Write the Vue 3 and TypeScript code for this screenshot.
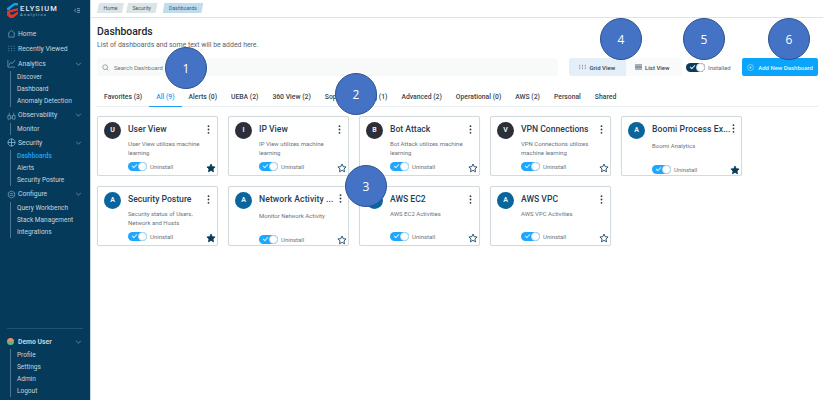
<template>
  <div class="app">
    <aside class="sidebar">
      <div class="brand">
        <svg class="logo" viewBox="0 0 12 15" width="12" height="15">
          <polygon points="0,5 7,0 11,0 11,2.500 7.500,2.500 3,6 3,7 0,7" fill="#1e9be0" />
          <polygon points="11,5 11,7.500 3,9.500 0,9.500 0,8 " fill="#e5352b" />
          <polygon points="0,9 3,9 3,11 5,12 11,8.500 11,11 6,15 3,15 0,12.500" fill="#e5352b" />
        </svg>
        <div class="brand-text">
          <div class="brand-name">ELYSIUM</div>
          <div class="brand-sub">Analytics</div>
        </div>
        <svg class="collapse" viewBox="0 0 10 8" width="6" height="5">
          <path d="M3 1 1 4l2 3M5 1h5M5 4h5M5 7h5" fill="none" stroke="#9db6c6" stroke-width="1.200" />
        </svg>
      </div>

      <nav class="nav">
        <div v-for="group in navGroups" :key="group.label" class="group">
          <div class="nav-head">
            <svg class="nav-icon" viewBox="0 0 10 10" width="9" height="9">
              <path :d="group.icon" fill="none" :stroke="group.active ? '#8fc7ea' : '#7fa3b9'" stroke-width=".8" />
            </svg>
            <span>{{ group.label }}</span>
            <svg v-if="group.items.length" class="chev" viewBox="0 0 8 5" width="7" height="4">
              <path d="M1 1l3 3 3-3" fill="none" stroke="#8fb0c4" stroke-width=".8" />
            </svg>
          </div>
          <ul v-if="group.items.length" class="sub">
            <li v-for="item in group.items" :key="item" :class="{ current: item === 'Dashboards' }">{{ item }}</li>
          </ul>
        </div>
      </nav>

      <div class="user">
        <div class="nav-head user-head">
          <span class="user-dot"></span>
          <span>Demo User</span>
          <svg class="chev" viewBox="0 0 8 5" width="7" height="4">
            <path d="M1 1l3 3 3-3" fill="none" stroke="#8fb0c4" stroke-width=".8" />
          </svg>
        </div>
        <ul class="sub">
          <li v-for="item in userItems" :key="item">{{ item }}</li>
        </ul>
      </div>
    </aside>

    <main class="main">
      <div class="crumbs">
        <span class="crumb">Home</span>
        <span class="crumb">Security</span>
        <span class="crumb on">Dashboards</span>
      </div>

      <div class="content">
        <h1>Dashboards</h1>
        <p class="lead">List of dashboards and some text will be added here.</p>

        <div class="tools">
          <div class="search">
            <svg viewBox="0 0 10 10" width="7" height="7">
              <circle cx="4.500" cy="4.500" r="3.400" fill="none" stroke="#6c7680" stroke-width=".9" />
              <path d="M7 7l2.200 2.200" stroke="#6c7680" stroke-width=".9" />
            </svg>
            <span>Search Dashboard</span>
          </div>
          <div class="views">
            <div class="view on">
              <svg viewBox="0 0 10 8" width="7" height="6">
                <path d="M1 1v1M1 3.500v1M1 6v1M5 1v1M5 3.500v1M5 6v1M9 1v1M9 3.500v1M9 6v1" stroke="#5b6670" stroke-width="1.400" />
              </svg>
              Grid View
            </div>
            <div class="view">
              <svg viewBox="0 0 10 8" width="7" height="6">
                <path d="M0 1h10M0 3h10M0 5h10M0 7h10" stroke="#3d4750" stroke-width="1" />
              </svg>
              List View
            </div>
          </div>
          <div class="installed">
            <span class="switch dark"><i></i></span>
            <span>Installed</span>
          </div>
          <button class="add">
            <svg viewBox="0 0 10 10" width="7" height="7">
              <circle cx="5" cy="5" r="4.200" fill="none" stroke="#cdeeff" stroke-width=".7" />
              <path d="M5 3v4M3 5h4" stroke="#cdeeff" stroke-width=".7" />
            </svg>
            Add New Dashboard
          </button>
        </div>

        <div class="tabs">
          <span v-for="tab in tabs" :key="tab" class="tab" :class="{ on: tab === 'All (9)' }">{{ tab }}</span>
        </div>

        <div class="cards">
          <div v-for="card in cards" :key="card.title" class="card" :class="{ long: card.long }">
            <div class="avatar" :class="{ slate: card.letter !== 'A' }">{{ card.letter }}</div>
            <div class="card-body">
              <div class="card-title">
                <span class="name">{{ card.title }}</span>
                <svg class="kebab" viewBox="0 0 3 10" width="3" height="9">
                  <circle cx="1.500" cy="1.300" r="1" fill="#2f3a44" />
                  <circle cx="1.500" cy="5" r="1" fill="#2f3a44" />
                  <circle cx="1.500" cy="8.700" r="1" fill="#2f3a44" />
                </svg>
              </div>
              <p class="desc">{{ card.desc }}</p>
              <div class="card-foot">
                <span class="switch"><i></i></span>
                <span class="uninstall">Uninstall</span>
                <svg class="star" viewBox="0 0 24 24" width="10" height="10">
                  <path
                    d="M12 2.500l2.900 6.300 6.900.8-5.100 4.700 1.400 6.800-6.100-3.400-6.100 3.400 1.400-6.800-5.100-4.700 6.900-.8z"
                    :fill="card.fav ? '#0b3a5a' : 'none'"
                    stroke="#0b3a5a"
                    stroke-width="2"
                  />
                </svg>
              </div>
            </div>
          </div>
        </div>
      </div>
    </main>

    <div v-for="mark in marks" :key="mark.n" class="mark" :style="{ left: mark.x + 'px', top: mark.y + 'px' }">
      {{ mark.n }}
    </div>
  </div>
</template>

<script setup lang="ts">
interface NavGroup {
  label: string;
  icon: string;
  items: string[];
  active?: boolean;
}

interface Card {
  letter: string;
  title: string;
  desc: string;
  fav?: boolean;
  long?: boolean;
}

const navGroups: NavGroup[] = [
  { label: "Home", icon: "M1 5l4-3.500L9 5M2 4.500V9h6V4.500", items: [] },
  { label: "Recently Viewed", icon: "M2 2v1M2 4.500v1M2 7v1M5 2v1M5 4.500v1M5 7v1M8 2v1M8 4.500v1M8 7v1", items: [] },
  {
    label: "Analytics",
    icon: "M1 1v8h8M2 7l2-3 2 1 3-4",
    items: ["Discover", "Dashboard", "Anomaly Detection"],
  },
  { label: "Observability", icon: "M1 5v4h3V5zM6 5v4h3V5zM4 7h2M2.500 5V2M7.500 5V2", items: ["Monitor"] },
  {
    label: "Security",
    icon: "M5 1a4 4 0 1 0 .01 0M1 5h8M5 1v8",
    items: ["Dashboards", "Alerts", "Security Posture"],
    active: true,
  },
  {
    label: "Configure",
    icon: "M5 1l3.500 2v4L5 9 1.500 7V3zM3 4h4M3 6h4",
    items: ["Query Workbench", "Stack Management", "Integrations"],
  },
];

const userItems = ["Profile", "Settings", "Admin", "Logout"];

const tabs = [
  "Favorites (3)",
  "All (9)",
  "Alerts (0)",
  "UEBA (2)",
  "360 View (2)",
  "Sophos Alert Log (1)",
  "Advanced (2)",
  "Operational (0)",
  "AWS (2)",
  "Personal",
  "Shared",
];

const cards: Card[] = [
  { letter: "U", title: "User View", desc: "User View utilizes machine learning", fav: true },
  { letter: "I", title: "IP View", desc: "IP View utilizes machine learning" },
  { letter: "B", title: "Bot Attack", desc: "Bot Attack utilizes machine learning" },
  { letter: "V", title: "VPN Connections", desc: "VPN Connections utilizes machine learning" },
  { letter: "A", title: "Boomi Process Ex...", desc: "Boomi Analytics", fav: true, long: true },
  { letter: "A", title: "Security Posture", desc: "Security status of Users, Network and Hosts", fav: true },
  { letter: "A", title: "Network Activity ...", desc: "Monitor Network Activity", long: true },
  { letter: "A", title: "AWS EC2", desc: "AWS EC2 Activities" },
  { letter: "A", title: "AWS VPC", desc: "AWS VPC Activities" },
];

// numbered callouts drawn over the page
const marks = [
  { n: 1, x: 165, y: 47 },
  { n: 2, x: 335, y: 73 },
  { n: 3, x: 345, y: 165 },
  { n: 4, x: 600, y: 18 },
  { n: 5, x: 683, y: 18 },
  { n: 6, x: 768, y: 18 },
];
</script>

<style>
html,
body {
  margin: 0;
  background: #fff;
}
</style>

<style scoped>
.app {
  position: relative;
  display: flex;
  width: 832px;
  height: 400px;
  overflow: hidden;
  font-family: Roboto, "Liberation Sans", sans-serif;
  color: #2c3640;
}

.sidebar {
  display: flex;
  flex-direction: column;
  flex: none;
  width: 90px;
  background: #063a5b;
  color: #c5d5df;
  font-size: 6.5px;
}

.brand {
  display: flex;
  align-items: center;
  height: 24px;
  padding: 0 10px 4px 7px;
  box-sizing: border-box;
}

.logo {
  flex: none;
  margin-right: 1px;
}

.brand-text {
  flex: 1;
  margin-top: 1px;
}

.brand-name {
  font-size: 7.5px;
  font-weight: 500;
  letter-spacing: 1.15px;
  line-height: 7px;
  color: #e3ecf2;
}

.brand-sub {
  font-size: 4px;
  letter-spacing: 1.2px;
  line-height: 5px;
  color: #a9bdca;
}

.nav {
  padding-top: 2px;
}

.nav-head {
  display: flex;
  align-items: center;
  gap: 2px;
  height: 15px;
  padding: 0 7px;
  font-size: 6.8px;
  font-weight: 400;
}

.nav-icon {
  flex: none;
}

.chev {
  margin-left: auto;
  margin-right: 1px;
}

.sub {
  margin: 0 0 0.5px 10px;
  padding: 0 0 0 6px;
  border-left: 1px solid #4a7590;
  list-style: none;
}

.sub li {
  height: 12px;
  line-height: 12px;
}

.sub li.current {
  color: #1ea7ff;
  font-weight: 500;
}

.user {
  margin-top: auto;
  margin-left: 7px;
  margin-right: 7px;
  padding-top: 5px;
  padding-bottom: 3px;
  border-top: 1px solid #1f5473;
}

.nav-head.user-head {
  gap: 4px;
  padding: 0;
  font-weight: 700;
}

.user-dot {
  width: 7px;
  height: 7px;
  border-radius: 50%;
  background: linear-gradient(#f08a5d 45%, #5cb88a 45%);
}

.user .sub {
  margin-left: 3px;
  margin-bottom: 0;
}

.main {
  flex: 1;
  min-width: 0;
  border-left: 1px solid #c9d8e2;
}

.crumbs {
  display: flex;
  gap: 2px;
  height: 18px;
  padding: 3px 0 0 6px;
  box-sizing: border-box;
  border-bottom: 1px solid #dfe3e6;
  margin-right: 9px;
}

.crumb {
  height: 10px;
  padding: 0 6.5px;
  font-size: 5.2px;
  line-height: 10px;
  background: #dbe4e6;
  color: #4b5963;
  clip-path: polygon(2px 0, 100% 0, calc(100% - 2px) 100%, 0 100%);
}

.crumb.on {
  margin-left: 3px;
  background: #bfdcee;
}

.content {
  padding: 7px 14px 0 6px;
}

h1 {
  margin: 0;
  font-size: 10.4px;
  font-weight: 500;
  line-height: 14px;
  color: #20272e;
}

.lead {
  margin: 1px 0 0;
  font-size: 6.9px;
  line-height: 11px;
  color: #5a6670;
}

.tools {
  display: flex;
  align-items: center;
  height: 18px;
  margin-top: 7px;
}

.search {
  display: flex;
  align-items: center;
  gap: 5px;
  width: 461px;
  height: 18px;
  padding-left: 5px;
  box-sizing: border-box;
  background: #f8fafa;
  border-radius: 3px;
  font-size: 6px;
  color: #6e7880;
}

.views {
  display: flex;
  margin-left: 11px;
  height: 18px;
  background: #f8fafb;
  border-radius: 3px;
  overflow: hidden;
}

.view {
  display: flex;
  align-items: center;
  justify-content: center;
  gap: 3px;
  width: 56.5px;
  font-size: 6px;
  font-weight: 500;
  color: #3d4750;
}

.view:last-child {
  padding-right: 3px;
  box-sizing: border-box;
}

.view.on {
  background: #e4eff7;
}

.installed {
  display: flex;
  align-items: center;
  gap: 3px;
  margin-left: 4px;
  font-size: 6px;
  color: #5f6a73;
}

.add {
  display: flex;
  align-items: center;
  justify-content: center;
  gap: 4px;
  width: 76px;
  height: 18px;
  margin-left: auto;
  padding: 0;
  border: 0;
  border-radius: 2px;
  background: #0aa5fb;
  color: #e2f5ff;
  font: 500 6px Roboto, "Liberation Sans", sans-serif;
}

.tabs {
  display: flex;
  height: 31px;
  box-sizing: border-box;
  padding-top: 15px;
  border-bottom: 1px solid #eceff1;
}

.tab {
  height: 16px;
  padding: 0 7px;
  font-size: 6.8px;
  font-weight: 500;
  line-height: 12px;
  box-sizing: border-box;
  color: #39434c;
}

.tab.on {
  color: #1a9cf0;
  border-bottom: 1px solid #1a9cf0;
}

.cards {
  display: grid;
  grid-template-columns: repeat(5, 121px);
  grid-auto-rows: 60px;
  gap: 10px;
  margin-top: 9px;
}

.card {
  display: flex;
  gap: 7px;
  padding: 4px 4px 0 6px;
  box-sizing: border-box;
  border: 1px solid #d3d9de;
  border-radius: 2px;
  background: #fff;
  box-shadow: 0 0 1px #e2e6e9;
}

.avatar {
  flex: none;
  width: 17px;
  height: 17px;
  margin-top: 1px;
  border-radius: 50%;
  background: #0a659c;
  color: #e8f1f6;
  font-size: 7px;
  font-weight: 700;
  line-height: 17px;
  text-align: center;
}

.avatar.slate {
  background: #2b2f3a;
}

.card-body {
  display: flex;
  flex-direction: column;
  flex: 1;
  min-width: 0;
}

.card-title {
  display: flex;
  align-items: center;
  justify-content: space-between;
  height: 12px;
  padding-right: 3px;
  margin-top: 2px;
  font-size: 8.6px;
  font-weight: 500;
  color: #1c4058;
  white-space: nowrap;
}

.card.long .card-title {
  padding-right: 2px;
  padding-bottom: 2px;
}

.card.long .name {
  letter-spacing: 0.1px;
}

.desc {
  height: 18px;
  margin: 3.5px 12px 0 0;
  font-size: 6px;
  line-height: 9px;
  color: #6a747c;
}

.card.long .desc {
  margin-top: 4.5px;
}

.card-foot {
  display: flex;
  align-items: center;
  gap: 3px;
  margin-top: 4px;
  font-size: 6px;
  color: #6a747c;
}

.star {
  margin-left: auto;
  margin-right: -3px;
  margin-top: 2px;
}

.switch {
  position: relative;
  display: inline-block;
  flex: none;
  width: 19px;
  height: 9px;
  border-radius: 5px;
  background: #1da7ff;
}

.switch.dark {
  background: #0b3a5a;
}

.switch i {
  position: absolute;
  top: 0;
  right: 0;
  width: 9px;
  height: 9px;
  box-sizing: border-box;
  border: 1px solid #c8d9e4;
  border-radius: 50%;
  background: #fff;
}

.switch::before {
  content: "";
  position: absolute;
  left: 4px;
  top: 2px;
  width: 4px;
  height: 2px;
  border-left: 1px solid #cfeeff;
  border-bottom: 1px solid #cfeeff;
  transform: rotate(-45deg);
}

.mark {
  position: absolute;
  width: 42px;
  height: 42px;
  box-sizing: border-box;
  border: 1px solid #2f528f;
  border-radius: 50%;
  background: #4472c4;
  color: #fff;
  font-family: "Open Sans", "Liberation Sans", sans-serif;
  font-size: 12px;
  line-height: 42px;
  text-align: center;
}
</style>
